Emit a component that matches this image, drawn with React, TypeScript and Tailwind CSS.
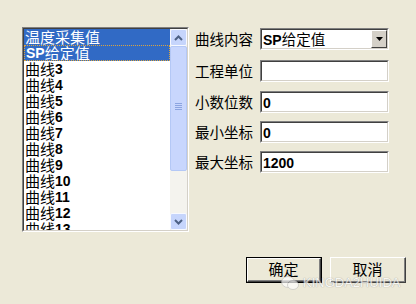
import React from "react";

const items = [
  "温度采集值",
  "SP给定值",
  "曲线3",
  "曲线4",
  "曲线5",
  "曲线6",
  "曲线7",
  "曲线8",
  "曲线9",
  "曲线10",
  "曲线11",
  "曲线12",
  "曲线13",
];

function Mixed({ text }: { text: string }) {
  const parts = text.split(/([A-Za-z0-9]+)/).filter((p) => p.length > 0);
  return (
    <>
      {parts.map((p, i) =>
        /^[A-Za-z0-9]+$/.test(p) ? (
          <span key={i} className="font-bold text-[14px] font-['Liberation_Sans',sans-serif]">
            {p}
          </span>
        ) : (
          <span key={i}>{p}</span>
        )
      )}
    </>
  );
}

function Sunken({ children, className = "" }: { children: React.ReactNode; className?: string }) {
  return (
    <div className={`border border-t-[#808080] border-l-[#808080] border-b-white border-r-white ${className}`}>
      <div className="w-full h-full border border-t-[#404040] border-l-[#404040] border-b-[#d4d0c8] border-r-[#d4d0c8] bg-white flex items-center">
        {children}
      </div>
    </div>
  );
}

function Chevron({ up }: { up?: boolean }) {
  return (
    <svg width="9" height="6" viewBox="0 0 9 6">
      <path
        d={up ? "M1 5 L4.5 1.5 L8 5" : "M1 1 L4.5 4.5 L8 1"}
        fill="none"
        stroke="#4d6185"
        strokeWidth="2"
      />
    </svg>
  );
}

function Row({ label, value, combo, mt }: { label: string; value: string; combo?: boolean; mt: string }) {
  return (
    <div className={`flex items-center ${mt}`}>
      <div className="w-[65px] text-[14.5px] leading-[18px] text-black whitespace-nowrap">{label}</div>
      <Sunken className="w-[129px] h-[22px]">
        <div className="flex-1 pl-[1px] text-[14.5px] leading-[16px] text-black whitespace-nowrap overflow-hidden">
          <Mixed text={value} />
        </div>
        {combo && (
          <div className="w-[16px] h-full border border-t-white border-l-white border-b-[#404040] border-r-[#404040] bg-[#d4d0c8] flex items-center justify-center">
            <svg width="7" height="4" viewBox="0 0 7 4">
              <path d="M0 0 L7 0 L3.5 4 Z" fill="black" />
            </svg>
          </div>
        )}
      </Sunken>
    </div>
  );
}

export default function App() {
  return (
    <div className="w-[416px] h-[304px] bg-[#ECE9D8] relative flex flex-col font-['Noto_Sans_CJK_SC','Liberation_Sans',sans-serif] overflow-hidden">
      <div className="flex pt-[27px] pl-[22px]">
        {/* listbox */}
        <div className="w-[167px] h-[205px] border border-t-[#808080] border-l-[#808080] border-b-white border-r-white">
          <div className="w-full h-full border border-t-[#404040] border-l-[#404040] border-b-[#d4d0c8] border-r-[#d4d0c8] bg-white flex">
            <div className="flex-1 overflow-hidden">
              {items.map((it, i) => (
                <div
                  key={it}
                  className={`h-[16px] flex items-center overflow-hidden text-[15px] leading-[16px] pl-[1px] whitespace-nowrap ${
                    i < 2 ? "bg-[#316AC5] text-white" : "text-black"
                  } ${i === 1 ? "border border-dotted border-[#d9a441]" : ""}`}
                >
                  <Mixed text={it} />
                </div>
              ))}
            </div>
            {/* scrollbar */}
            <div className="w-[17px] h-full bg-[#f4f3ee] flex flex-col">
              <div className="h-[17px] rounded-[2px] border border-[#f7f9ff] bg-[#c6d5fc] flex items-center justify-center">
                <Chevron up />
              </div>
              <div className="h-[125px] rounded-[2px] border border-[#b4c8f6] bg-[#c8d6fd] flex items-end justify-center pb-[60px]">
                <div className="flex flex-col gap-[1px]">
                  <div className="w-[7px] h-[1px] bg-[#8ca4e0]" />
                  <div className="w-[7px] h-[1px] bg-[#8ca4e0]" />
                  <div className="w-[7px] h-[1px] bg-[#8ca4e0]" />
                  <div className="w-[7px] h-[1px] bg-[#8ca4e0]" />
                </div>
              </div>
              <div className="flex-1" />
              <div className="h-[17px] rounded-[2px] border border-[#f7f9ff] bg-[#c6d5fc] flex items-center justify-center">
                <Chevron />
              </div>
            </div>
          </div>
        </div>

        {/* form */}
        <div className="ml-[6px] flex flex-col">
          <Row label="曲线内容" value="SP给定值" combo mt="mt-[1px]" />
          <Row label="工程单位" value="" mt="mt-[10px]" />
          <Row label="小数位数" value="0" mt="mt-[9px]" />
          <Row label="最小坐标" value="0" mt="mt-[8px]" />
          <Row label="最大坐标" value="1200" mt="mt-[8px]" />
        </div>
      </div>

      {/* buttons */}
      <div className="flex justify-end gap-[8px] pr-[10px] mt-[25px]">
        <div className="w-[76px] h-[26px] border border-black">
          <div className="w-full h-full border border-t-white border-l-white border-b-[#404040] border-r-[#404040]">
            <div className="w-full h-full border-r border-b border-[#808080] flex items-center justify-center text-[15px] text-black">
              确定
            </div>
          </div>
        </div>
        <div className="w-[76px] h-[26px] border border-t-white border-l-white border-b-[#404040] border-r-[#404040]">
          <div className="w-full h-full border-r border-b border-[#808080] flex items-center justify-center text-[15px] text-black">
            取消
          </div>
        </div>
      </div>

      {/* watermark */}
      <div className="absolute left-[281px] top-[276px] flex items-center gap-[4px] opacity-70 pointer-events-none">
        <svg width="18" height="14" viewBox="0 0 18 14">
          <ellipse cx="7" cy="6" rx="6.5" ry="5.5" fill="#ffffff" stroke="#bbbbbb" strokeWidth="0.8" />
          <ellipse cx="12" cy="9" rx="5.5" ry="4.5" fill="#ffffff" stroke="#bbbbbb" strokeWidth="0.8" />
        </svg>
        <span className="text-[13px] leading-[14px] text-white font-['Liberation_Sans',sans-serif] [text-shadow:0_0_1px_#999,0_0_1px_#999]">
          KINGDA2HUIDA
        </span>
      </div>
    </div>
  );
}
